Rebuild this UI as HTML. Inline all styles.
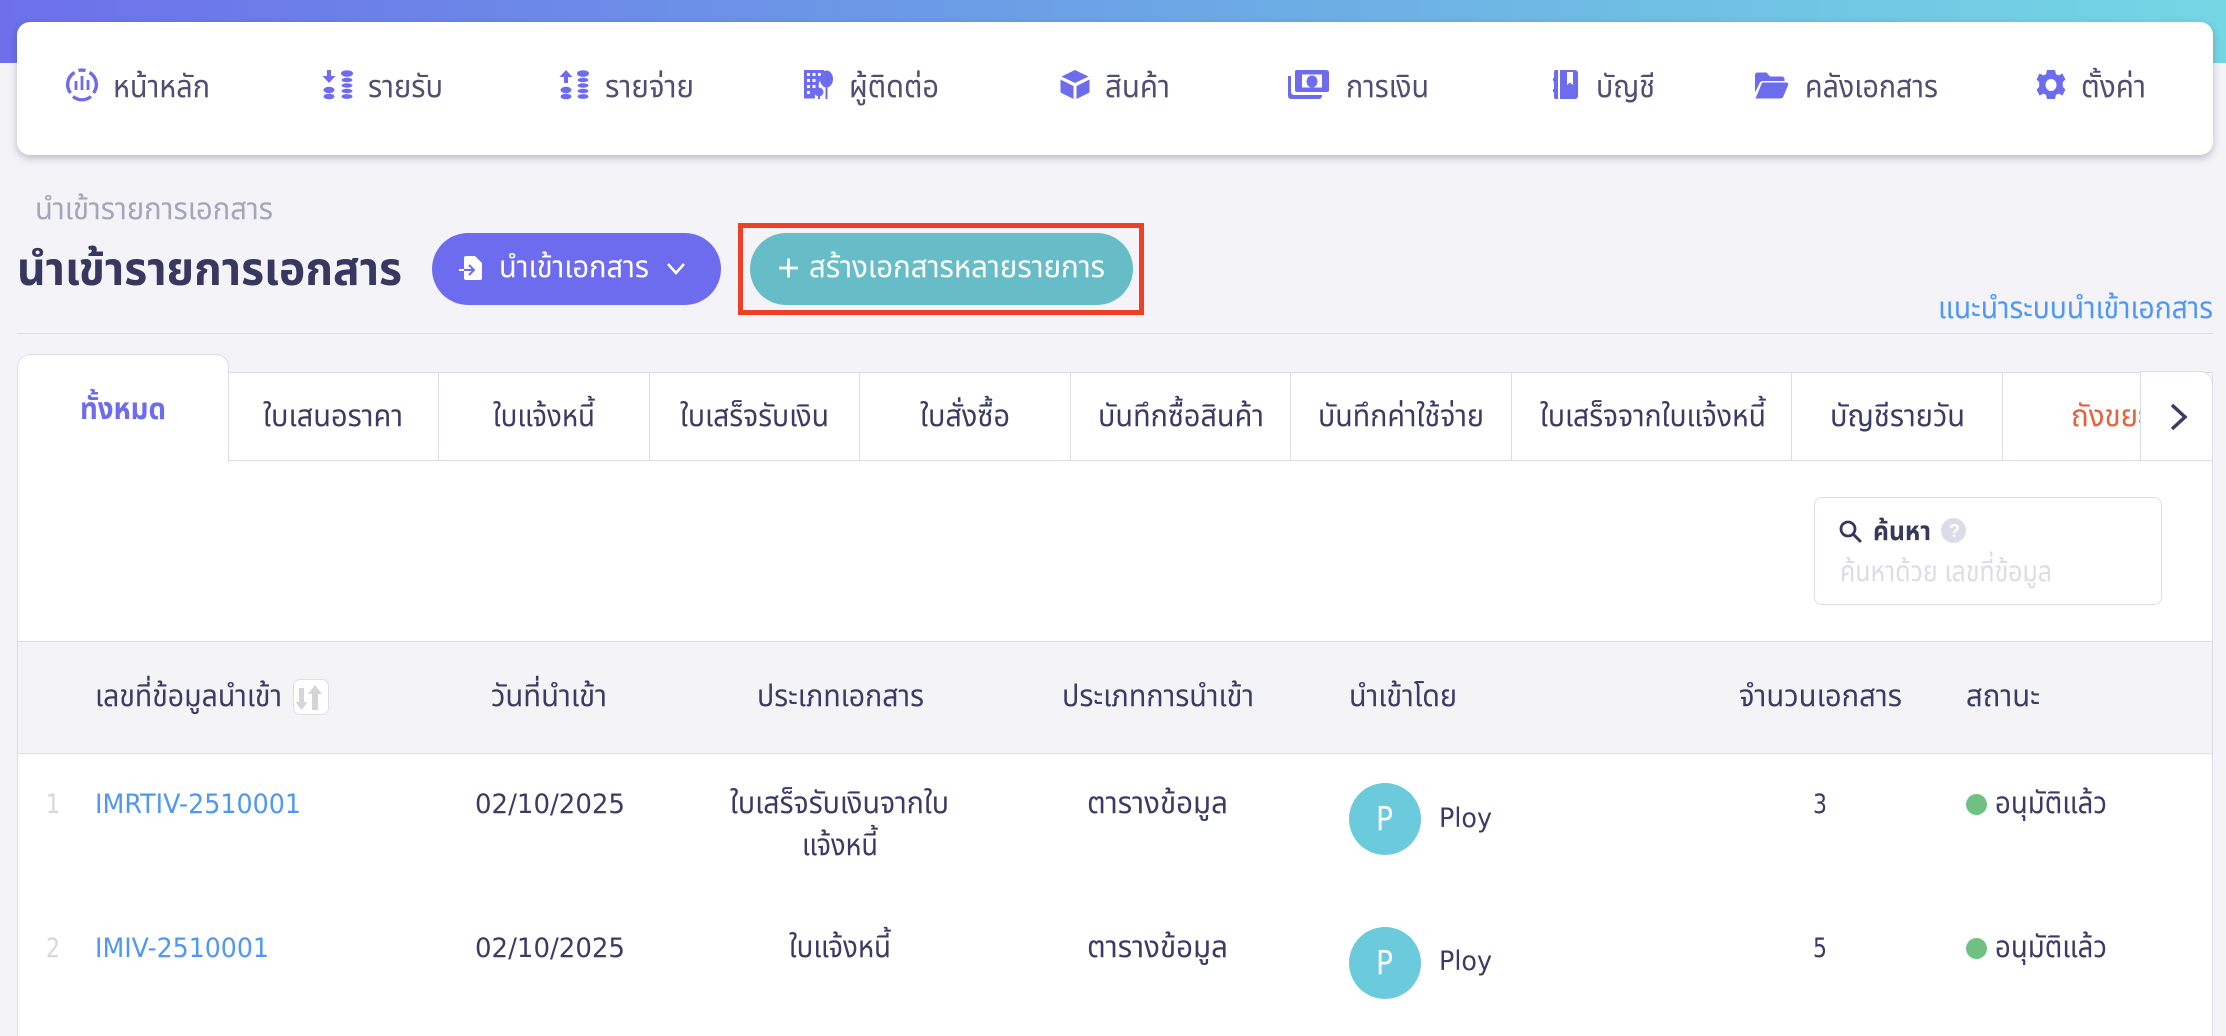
<!DOCTYPE html>
<html lang="th">
<head>
<meta charset="utf-8">
<title>นำเข้ารายการเอกสาร</title>
<style>
html,body{margin:0;padding:0;width:2226px;height:1036px;overflow:hidden;background:#f3f3f8;}
body{position:relative;font-family:"Liberation Sans","Noto Sans Thai","Noto Sans CJK SC",sans-serif;}
div{position:absolute;box-sizing:border-box;}
#grad{left:0;top:0;width:2226px;height:63px;background:linear-gradient(90deg,#6d70ea 0%,#6b9ee6 45%,#6fbfe4 75%,#74d7e4 100%);}
#nav{left:17px;top:22px;width:2196px;height:133px;background:#fff;border-radius:13px;box-shadow:0 3px 8px rgba(40,40,70,.28);}
#hr{left:17px;top:333px;width:2196px;height:1px;background:#dddde6;}
#btn1{left:432px;top:233px;width:289px;height:72px;border-radius:36px;background:#6e6cee;}
#btn2{left:750px;top:233px;width:383px;height:72px;border-radius:36px;background:#66bdc8;}
#red{left:738px;top:223px;width:406px;height:92px;border:5px solid #ee4026;}
#card{left:17px;top:372px;width:2196px;height:700px;background:#fff;border:1px solid #dcdce6;}
#tabrow{left:228px;top:372px;width:1985px;height:89px;background:#fff;border:1px solid #dcdce6;border-width:1px 0 1.5px 0;border-top-right-radius:13px;}
.sep{top:372px;width:1px;height:88px;background:#dcdce6;}
#active{left:17px;top:354px;width:212px;height:108px;background:#fff;border:1px solid #dcdce6;border-bottom:0;border-radius:13px 13px 0 0;}
#arrow{left:2140px;top:371px;width:73px;height:90px;background:#fff;border:1px solid #dcdce6;border-radius:0 13px 0 0;}
#thead{left:18px;top:641px;width:2194px;height:113px;background:#f4f4f7;border-top:1.5px solid #dcdce6;border-bottom:1.5px solid #dcdce3;}
#search{left:1814px;top:497px;width:348px;height:108px;border:1.5px solid #dcdce6;border-radius:8px;background:#fff;}
#sort{left:293px;top:679px;width:36px;height:36px;background:#fff;border:1px solid #dedee4;border-radius:7px;}
.av{left:1349px;width:72px;height:72px;border-radius:50%;background:#6ccadd;}
svg{position:absolute;left:0;top:0;}
text{font-family:"Liberation Sans","Noto Sans Thai","Noto Sans CJK SC",sans-serif;font-size:30px;fill:#3b3b66;}
.n{fill:#4f4f73;font-size:31px;}
.num{font-family:"DejaVu Sans","Liberation Sans",sans-serif;font-size:27px;}
.b{font-weight:700;}
.ic{fill:#6e6cee;}
</style>
</head>
<body>
<div id="grad"></div>
<div id="nav"></div>
<div id="hr"></div>
<div id="btn1"></div>
<div id="btn2"></div>
<div id="red"></div>
<div id="card"></div>
<div id="tabrow"></div>
<div class="sep" style="left:438px"></div>
<div class="sep" style="left:649px"></div>
<div class="sep" style="left:859px"></div>
<div class="sep" style="left:1070px"></div>
<div class="sep" style="left:1290px"></div>
<div class="sep" style="left:1511px"></div>
<div class="sep" style="left:1791px"></div>
<div class="sep" style="left:2002px"></div>
<div id="active"></div>
<div id="arrow"></div>
<div id="thead"></div>
<div id="search"></div>
<div id="sort"></div>
<div class="av" style="top:783px"></div>
<div class="av" style="top:927px"></div>

<svg width="2226" height="1036" viewBox="0 0 2226 1036" xmlns="http://www.w3.org/2000/svg">
<defs>
<clipPath id="trash"><rect x="2060" y="380" width="80" height="70"/></clipPath>
</defs>

<!-- nav icons -->
<g fill="none" stroke="#6e6cee" stroke-width="3.400" stroke-linecap="butt">
  <path d="M74.500 72.500A14 14 0 0 0 70.500 93"/>
  <path d="M89.500 72.500A14 14 0 0 1 93.500 93"/>
  <path d="M73 96.500A14 14 0 0 0 91 96.500"/>
  <path d="M78.500 70.500A14 14 0 0 1 85.500 70.500"/>
  <path d="M76 81v9M82 76v14M88 80v10" stroke-width="2.800"/>
</g>

<g class="ic">
  <path d="M327 70h4v6h4.500l-6.500 7-6.500-7h4.500z"/>
  <ellipse cx="329" cy="90" rx="5.500" ry="3.200"/><ellipse cx="329" cy="96.500" rx="5.500" ry="2.800"/>
  <ellipse cx="347" cy="73.500" rx="6" ry="3.300"/><ellipse cx="347" cy="80" rx="5.500" ry="2.200"/><ellipse cx="347" cy="85.500" rx="5.500" ry="2.200"/><ellipse cx="347" cy="91" rx="5.500" ry="2.200"/><ellipse cx="347" cy="96.500" rx="5.500" ry="2.400"/>
</g>
<g class="ic">
  <path d="M564 83v-6h-4.500l6.500-7 6.500 7H568v6z"/>
  <ellipse cx="566" cy="90" rx="5.500" ry="3.200"/><ellipse cx="566" cy="96.500" rx="5.500" ry="2.800"/>
  <ellipse cx="583" cy="73.500" rx="6" ry="3.300"/><ellipse cx="583" cy="80" rx="5.500" ry="2.200"/><ellipse cx="583" cy="85.500" rx="5.500" ry="2.200"/><ellipse cx="583" cy="91" rx="5.500" ry="2.200"/><ellipse cx="583" cy="96.500" rx="5.500" ry="2.400"/>
</g>

<!-- contacts -->
<path class="ic" fill-rule="evenodd" d="M804 70h20v7a10 10 0 0 0-4 14l-3 1a7 7 0 0 0-2 6.500h-11zM807 73v3h3v-3zM812.500 73v3h3v-3zM818 73v3h3v-3zM807 79v3h3v-3zM812.500 79v3h3v-3zM807 85v3h3v-3zM812.500 85v3h3v-3zM807 91v3h3v-3z"/>
<ellipse class="ic" cx="826.500" cy="79" rx="6.500" ry="8.500"/><path class="ic" d="M825.500 86h2v13h-2z"/>
<circle class="ic" cx="819" cy="92" r="4.500"/><path class="ic" d="M818 95h2v4h-2z"/>

<!-- box -->
<path class="ic" d="M1075 70l13.500 6.500-13.500 6.500-13.500-6.500zM1060.500 79.500l13 6.500v13l-13-6.500zM1089.500 79.500l-13 6.500v13l13-6.500z"/>

<!-- money -->
<path class="ic" fill-rule="evenodd" d="M1297 70h30a3 3 0 0 1 2 2v18a2 2 0 0 1-2 2h-30a2 2 0 0 1-2-2V72a2 2 0 0 1 2-2zM1302 74.500h20v13h-20zM1312 75.500a5.500 6 0 1 0 .01 0z"/>
<path class="ic" d="M1288 76h3v16a3 3 0 0 0 3 3h28v1a3 3 0 0 1-3 3h-28a3 3 0 0 1-3-3z"/>

<!-- book -->
<path class="ic" fill-rule="evenodd" d="M1556 70h2v29h-2a2 2 0 0 1-2-2v-5h-1v-3h1V81h-1v-3h1v-6a2 2 0 0 1 2-2zM1560 70h15a3 3 0 0 1 3 3v23a3 3 0 0 1-3 3h-15zM1567 72v13l3-2.500 3 2.500V72z"/>

<!-- folder -->
<path class="ic" d="M1755 75a2.500 2.500 0 0 1 2.500-2.500h9l3.500 4h12a2.500 2.500 0 0 1 2.500 2.500v2h-21a4 4 0 0 0-4 2.500l-4.500 9z"/>
<path class="ic" d="M1761.500 84a2 2 0 0 1 2-1.500h23a1.800 1.800 0 0 1 1.600 2.600l-5 12a2.500 2.500 0 0 1-2.300 1.400h-25.300z"/>

<!-- gear -->
<path class="ic" fill-rule="evenodd" d="M2047 70h8l1 4.200 3 1.200 3.400-2 3 6-2.600 2.800v4.600l2.600 2.800-3 6-3.400-2-3 1.200-1 4.200h-8l-1-4.200-3-1.200-3.400 2-3-6 2.600-2.800v-4.600l-2.600-2.800 3-6 3.400 2 3-1.200zM2051 79a5.500 6 0 1 0 .01 0z"/>

<!-- nav labels -->
<text class="n" x="113" y="97" textLength="97" lengthAdjust="spacingAndGlyphs">หน้าหลัก</text>
<text class="n" x="368" y="97" textLength="75" lengthAdjust="spacingAndGlyphs">รายรับ</text>
<text class="n" x="605" y="97" textLength="89" lengthAdjust="spacingAndGlyphs">รายจ่าย</text>
<text class="n" x="849" y="97" textLength="90" lengthAdjust="spacingAndGlyphs">ผู้ติดต่อ</text>
<text class="n" x="1105" y="97" textLength="65" lengthAdjust="spacingAndGlyphs">สินค้า</text>
<text class="n" x="1346" y="97" textLength="83" lengthAdjust="spacingAndGlyphs">การเงิน</text>
<text class="n" x="1596" y="97" textLength="59" lengthAdjust="spacingAndGlyphs">บัญชี</text>
<text class="n" x="1805" y="97" textLength="133" lengthAdjust="spacingAndGlyphs">คลังเอกสาร</text>
<text class="n" x="2081" y="97" textLength="65" lengthAdjust="spacingAndGlyphs">ตั้งค่า</text>

<!-- heading -->
<text x="35" y="219" textLength="238" lengthAdjust="spacingAndGlyphs" style="fill:#a6a5b9;font-size:30px">นำเข้ารายการเอกสาร</text>
<text class="b" x="17" y="285" textLength="385" lengthAdjust="spacingAndGlyphs" style="font-size:46px;fill:#37375f">นำเข้ารายการเอกสาร</text>

<!-- button 1 -->
<path fill="#fff" d="M466 256h9l7 7v15a2 2 0 0 1-2 2h-14a2 2 0 0 1-2-2v-20a2 2 0 0 1 2-2z"/>
<path fill="none" stroke="#6e6cee" stroke-width="2" d="M464 270h10M469 265l5 5-5 5"/>
<path fill="none" stroke="#fff" stroke-width="2" d="M459 270h5"/>
<text x="499" y="277" textLength="150" lengthAdjust="spacingAndGlyphs" style="fill:#fff">นำเข้าเอกสาร</text>
<path fill="none" stroke="#fff" stroke-width="2.500" d="M668 264l8 9 8-9"/>

<!-- button 2 -->
<path fill="none" stroke="#fff" stroke-width="2.800" d="M788.500 258.500v19M779 268h19"/>
<text x="809" y="277" textLength="296" lengthAdjust="spacingAndGlyphs" style="fill:#fff">สร้างเอกสารหลายรายการ</text>

<!-- link -->
<text x="1938" y="318" textLength="275" lengthAdjust="spacingAndGlyphs" style="fill:#4f97f7">แนะนำระบบนำเข้าเอกสาร</text>

<!-- tabs -->
<text class="b" x="80" y="419" textLength="86" lengthAdjust="spacingAndGlyphs" style="fill:#6e6cee">ทั้งหมด</text>
<text x="263" y="426" textLength="140" lengthAdjust="spacingAndGlyphs">ใบเสนอราคา</text>
<text x="493" y="426" textLength="102" lengthAdjust="spacingAndGlyphs">ใบแจ้งหนี้</text>
<text x="680" y="426" textLength="149" lengthAdjust="spacingAndGlyphs">ใบเสร็จรับเงิน</text>
<text x="920" y="426" textLength="90" lengthAdjust="spacingAndGlyphs">ใบสั่งซื้อ</text>
<text x="1098" y="426" textLength="166" lengthAdjust="spacingAndGlyphs">บันทึกซื้อสินค้า</text>
<text x="1318" y="426" textLength="166" lengthAdjust="spacingAndGlyphs">บันทึกค่าใช้จ่าย</text>
<text x="1540" y="426" textLength="226" lengthAdjust="spacingAndGlyphs">ใบเสร็จจากใบแจ้งหนี้</text>
<text x="1830" y="426" textLength="135" lengthAdjust="spacingAndGlyphs">บัญชีรายวัน</text>
<g clip-path="url(#trash)"><text x="2071" y="426" textLength="77" lengthAdjust="spacingAndGlyphs" style="fill:#e8603c">ถังขยะ</text></g>
<path fill="none" stroke="#3b3b66" stroke-width="3.500" d="M2172 405l13 12-13 12"/>

<!-- search -->
<circle cx="1848" cy="529" r="7" fill="none" stroke="#37375f" stroke-width="2.800"/>
<path d="M1853 534l7 7" stroke="#37375f" stroke-width="3" stroke-linecap="round"/>
<text class="b" x="1873" y="540" textLength="58" lengthAdjust="spacingAndGlyphs" style="font-size:27px;fill:#37375f">ค้นหา</text>
<circle cx="1953.500" cy="530.500" r="12.500" fill="#dcdce8"/>
<text class="b" x="1949" y="537" style="font-size:18px;fill:#fff">?</text>
<text x="1840" y="581" textLength="212" lengthAdjust="spacingAndGlyphs" style="font-size:29px;fill:#dcdce6">ค้นหาด้วย เลขที่ข้อมูล</text>

<!-- table header -->
<text x="95" y="706" textLength="187" lengthAdjust="spacingAndGlyphs">เลขที่ข้อมูลนำเข้า</text>
<path fill="#d5d5d9" d="M299 688h5v14h3.500l-6 8-6-8h3.500z"/>
<path fill="#d5d5d9" d="M315 685l7 9h-4v16h-6v-16h-4z"/>
<text x="491" y="706" textLength="116" lengthAdjust="spacingAndGlyphs">วันที่นำเข้า</text>
<text x="757" y="706" textLength="167" lengthAdjust="spacingAndGlyphs">ประเภทเอกสาร</text>
<text x="1062" y="706" textLength="192" lengthAdjust="spacingAndGlyphs">ประเภทการนำเข้า</text>
<text x="1349" y="706" textLength="108" lengthAdjust="spacingAndGlyphs">นำเข้าโดย</text>
<text x="1739" y="706" textLength="163" lengthAdjust="spacingAndGlyphs">จำนวนเอกสาร</text>
<text x="1966" y="706" textLength="74" lengthAdjust="spacingAndGlyphs">สถานะ</text>

<!-- row 1 -->
<text class="num" x="46" y="813" textLength="14" lengthAdjust="spacingAndGlyphs" style="fill:#d8d8d8">1</text>
<text class="num" x="95" y="813" textLength="206" lengthAdjust="spacingAndGlyphs" style="fill:#4f97f7">IMRTIV-2510001</text>
<text class="num" x="475" y="813" textLength="150" lengthAdjust="spacingAndGlyphs">02/10/2025</text>
<text x="730" y="813" textLength="219" lengthAdjust="spacingAndGlyphs">ใบเสร็จรับเงินจากใบ</text>
<text x="802" y="855" textLength="76" lengthAdjust="spacingAndGlyphs">แจ้งหนี้</text>
<text x="1087" y="813" textLength="141" lengthAdjust="spacingAndGlyphs">ตารางข้อมูล</text>
<text class="num" x="1376" y="830" textLength="17" lengthAdjust="spacingAndGlyphs" style="fill:#fff;font-size:33px">P</text>
<text class="num" x="1439" y="827" textLength="53" lengthAdjust="spacingAndGlyphs">Ploy</text>
<text class="num" x="1813" y="813" textLength="14" lengthAdjust="spacingAndGlyphs">3</text>
<circle cx="1976.500" cy="804.500" r="10.500" fill="#6fc183"/>
<text x="1995" y="813" textLength="112" lengthAdjust="spacingAndGlyphs">อนุมัติแล้ว</text>

<!-- row 2 -->
<text class="num" x="46" y="957" textLength="14" lengthAdjust="spacingAndGlyphs" style="fill:#d8d8d8">2</text>
<text class="num" x="95" y="957" textLength="174" lengthAdjust="spacingAndGlyphs" style="fill:#4f97f7">IMIV-2510001</text>
<text class="num" x="475" y="957" textLength="150" lengthAdjust="spacingAndGlyphs">02/10/2025</text>
<text x="789" y="957" textLength="102" lengthAdjust="spacingAndGlyphs">ใบแจ้งหนี้</text>
<text x="1087" y="957" textLength="141" lengthAdjust="spacingAndGlyphs">ตารางข้อมูล</text>
<text class="num" x="1376" y="974" textLength="17" lengthAdjust="spacingAndGlyphs" style="fill:#fff;font-size:33px">P</text>
<text class="num" x="1439" y="970" textLength="53" lengthAdjust="spacingAndGlyphs">Ploy</text>
<text class="num" x="1813" y="957" textLength="14" lengthAdjust="spacingAndGlyphs">5</text>
<circle cx="1976.500" cy="948.500" r="10.500" fill="#6fc183"/>
<text x="1995" y="957" textLength="112" lengthAdjust="spacingAndGlyphs">อนุมัติแล้ว</text>
</svg>
</body>
</html>
